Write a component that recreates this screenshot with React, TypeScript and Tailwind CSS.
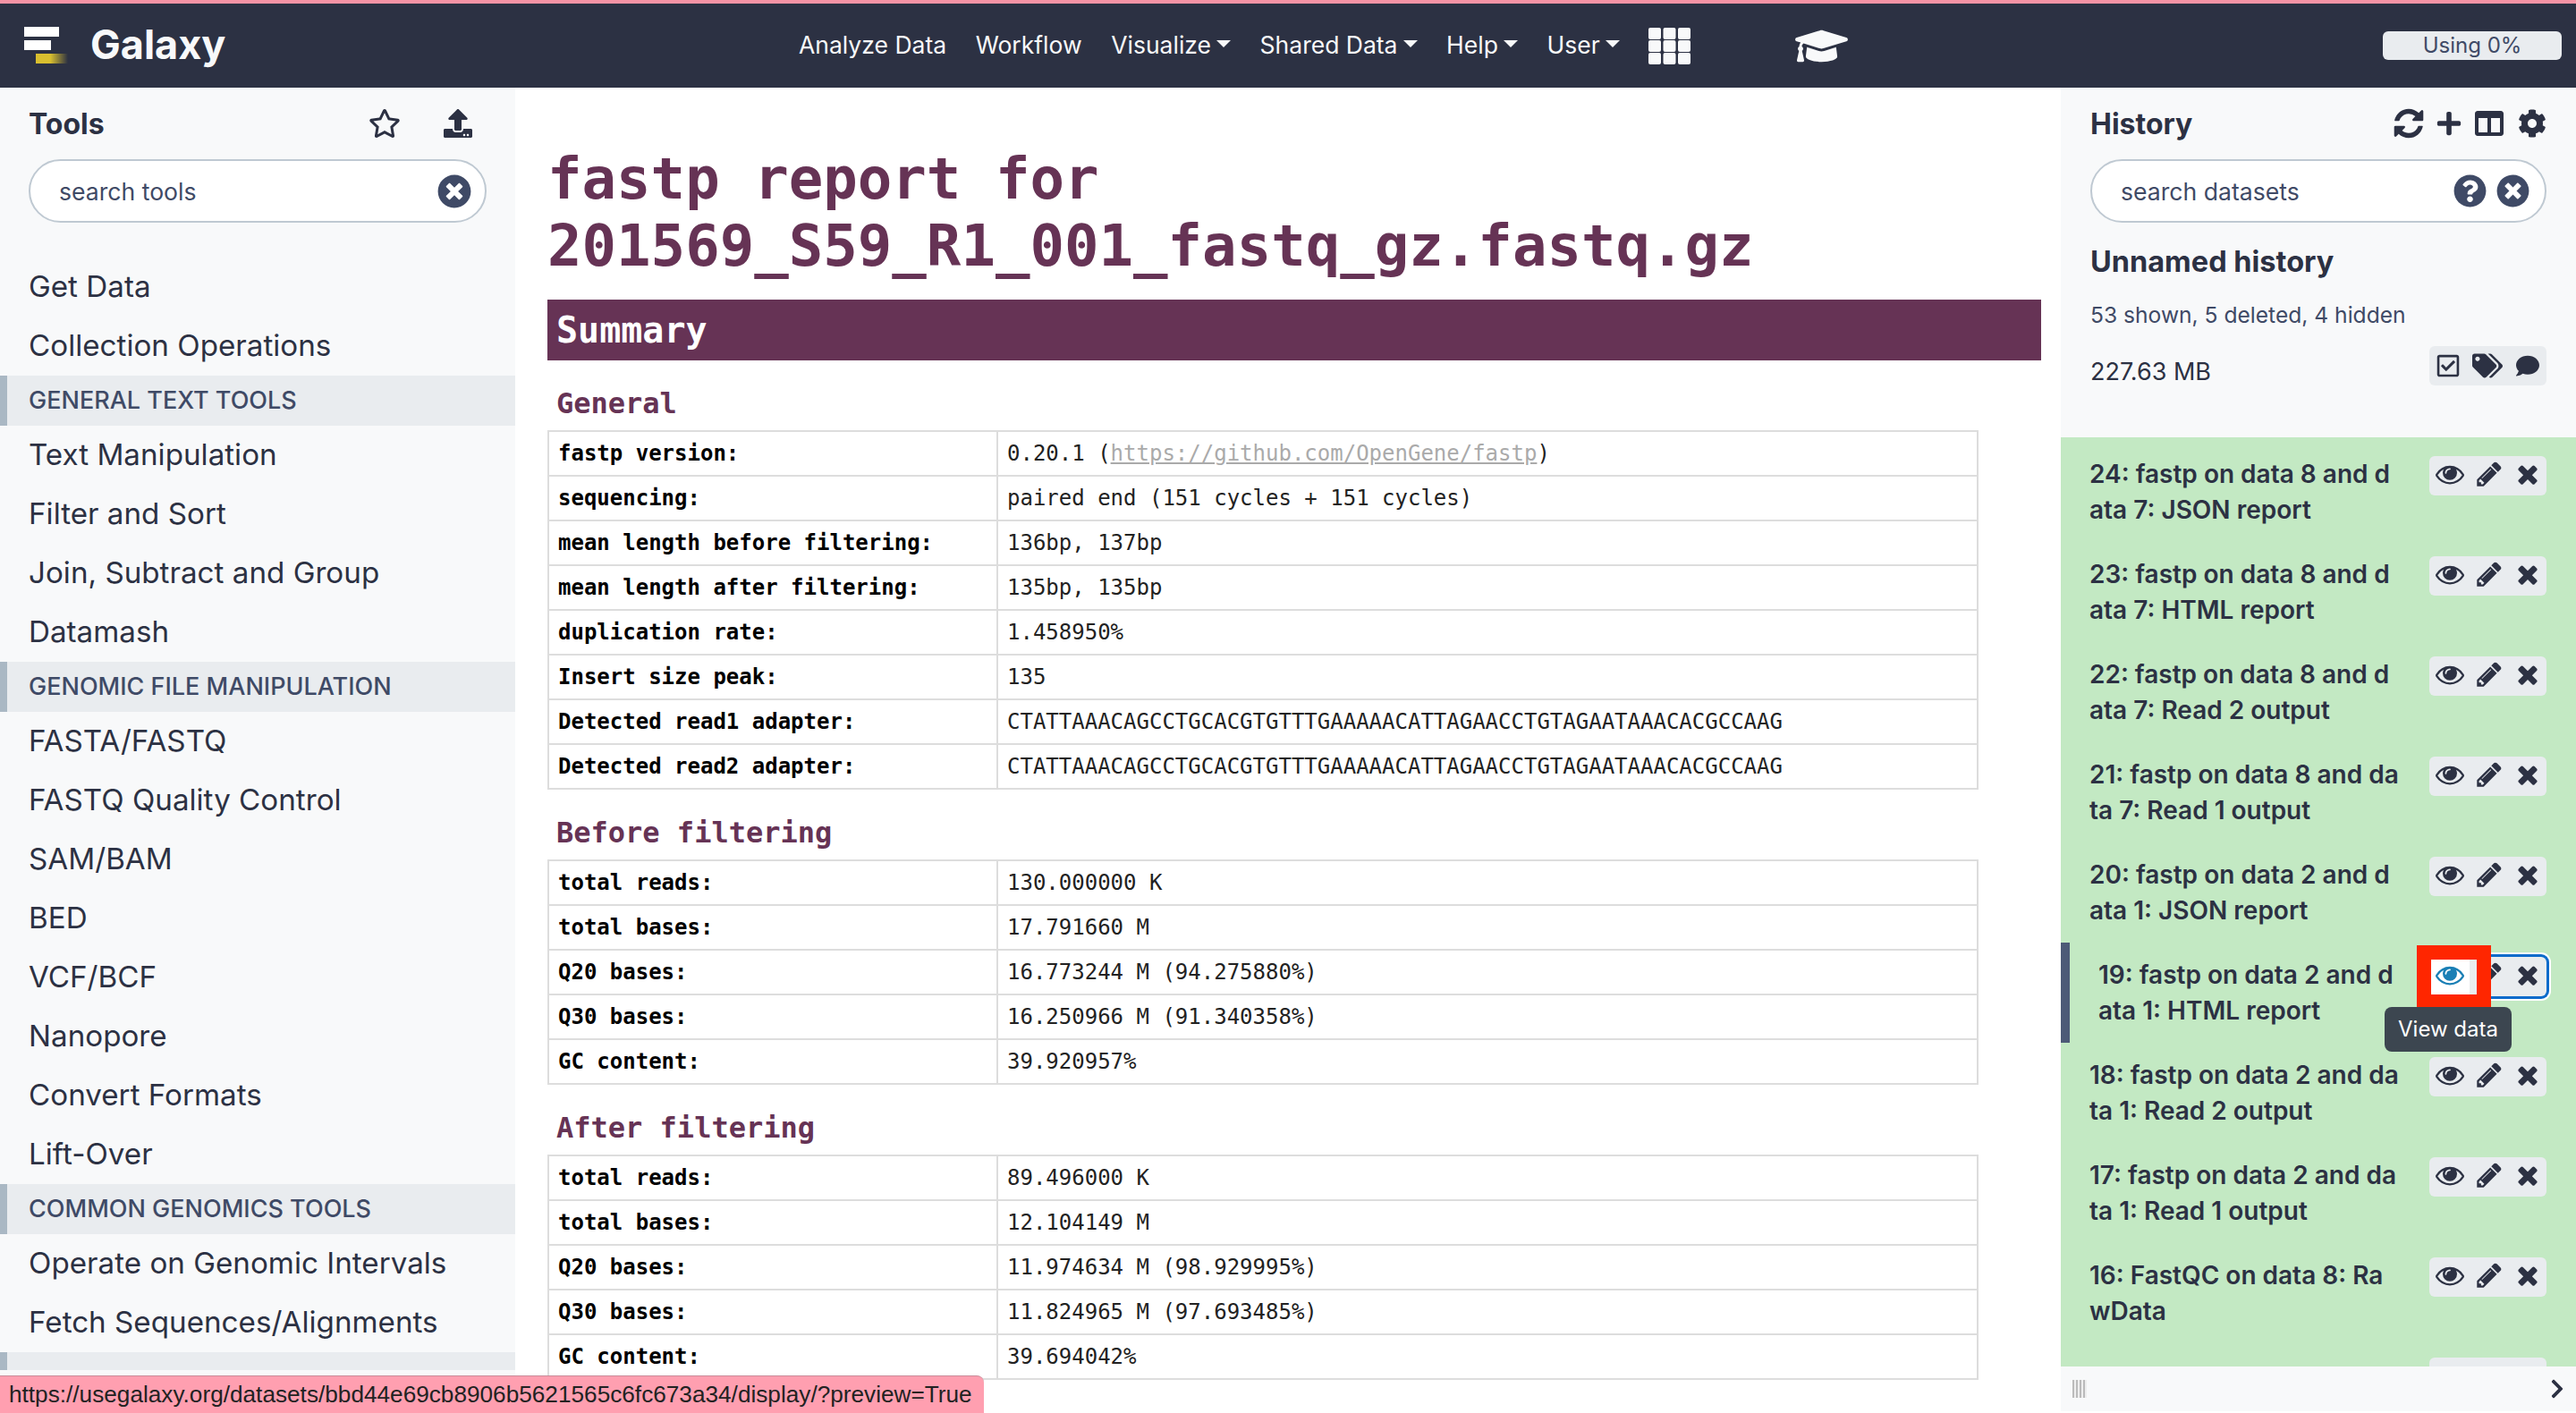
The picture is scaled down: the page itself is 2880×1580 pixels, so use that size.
import React from "react";
import {
  FaCog,
  FaColumns,
  FaComment,
  FaChevronRight,
  FaGraduationCap,
  FaPlus,
  FaQuestionCircle,
  FaRegCheckSquare,
  FaRegStar,
  FaTags,
  FaTimesCircle,
  FaUpload,
} from "react-icons/fa";

const EYE =
  "M1664 960q-152-236-381-353 61 104 61 225 0 185-131.5 316.5t-316.5 131.5-316.5-131.5-131.5-316.5q0-121 61-225-229 117-381 353 133 205 333.5 326.5t434.5 121.5 434.5-121.5 333.5-326.5zm-720-384q0-20-14-34t-34-14q-125 0-214.5 89.5t-89.5 214.5q0 20 14 34t34 14 34-14 14-34q0-86 61-147t147-61q20 0 34-14t14-34zm848 384q0 34-20 69-140 230-376.5 368.5t-499.5 138.5-499.5-139-376.5-368q-20-35-20-69t20-69q140-229 376.5-368t499.5-139 499.5 139 376.5 368q20 35 20 69z";
const PENCIL =
  "M491 1536l91-91-235-235-91 91v107h128v128h107zm523-928q0-22-22-22-10 0-17 7l-542 542q-7 7-7 17 0 22 22 22 10 0 17-7l542-542q7-7 7-17zm-54-192l416 416-832 832h-416v-416zm683 96q0 53-37 90l-166 166-416-416 166-165q36-38 90-38 53 0 91 38l235 234q37 39 37 91z";
const TIMES =
  "M1490 1322q0 40-28 68l-136 136q-28 28-68 28t-68-28l-294-294-294 294q-28 28-68 28t-68-28l-136-136q-28-28-28-68t28-68l294-294-294-294q-28-28-28-68t28-68l136-136q28-28 68-28t68 28l294 294 294-294q28-28 68-28t68 28l136 136q28 28 28 68t-28 68l-294 294 294 294q28 28 28 68z";
const REFRESH =
  "M1639 1056q0 5-1 7-64 268-268 434.5t-478 166.5q-146 0-282.5-55t-243.5-157l-129 129q-19 19-45 19t-45-19-19-45v-448q0-26 19-45t45-19h448q26 0 45 19t19 45-19 45l-137 137q71 66 161 102t187 36q134 0 250-65t186-179q11-17 53-117 8-23 30-23h192q13 0 22.5 9.5t9.5 22.5zm25-800v448q0 26-19 45t-45 19h-448q-26 0-45-19t-19-45 19-45l138-138q-148-137-349-137-134 0-250 65t-186 179q-11 17-53 117-8 23-30 23h-199q-13 0-22.5-9.5t-9.5-22.5v-7q65-268 270-434.5t480-166.5q146 0 284 55.5t245 156.5l130-129q19-19 45-19t45 19 19 45z";

const Fa4 = ({ d, className }: { d: string; className?: string }) => (
  <svg viewBox="0 0 1792 1792" fill="currentColor" className={className}>
    <path d={d} />
  </svg>
);

const toolGroups: { type: "item" | "section"; label: string }[] = [
  { type: "item", label: "Get Data" },
  { type: "item", label: "Collection Operations" },
  { type: "section", label: "GENERAL TEXT TOOLS" },
  { type: "item", label: "Text Manipulation" },
  { type: "item", label: "Filter and Sort" },
  { type: "item", label: "Join, Subtract and Group" },
  { type: "item", label: "Datamash" },
  { type: "section", label: "GENOMIC FILE MANIPULATION" },
  { type: "item", label: "FASTA/FASTQ" },
  { type: "item", label: "FASTQ Quality Control" },
  { type: "item", label: "SAM/BAM" },
  { type: "item", label: "BED" },
  { type: "item", label: "VCF/BCF" },
  { type: "item", label: "Nanopore" },
  { type: "item", label: "Convert Formats" },
  { type: "item", label: "Lift-Over" },
  { type: "section", label: "COMMON GENOMICS TOOLS" },
  { type: "item", label: "Operate on Genomic Intervals" },
  { type: "item", label: "Fetch Sequences/Alignments" },
  { type: "section", label: "" },
];

const general = [
  ["sequencing:", "paired end (151 cycles + 151 cycles)"],
  ["mean length before filtering:", "136bp, 137bp"],
  ["mean length after filtering:", "135bp, 135bp"],
  ["duplication rate:", "1.458950%"],
  ["Insert size peak:", "135"],
  ["Detected read1 adapter:", "CTATTAAACAGCCTGCACGTGTTTGAAAAACATTAGAACCTGTAGAATAAACACGCCAAG"],
  ["Detected read2 adapter:", "CTATTAAACAGCCTGCACGTGTTTGAAAAACATTAGAACCTGTAGAATAAACACGCCAAG"],
];
const before = [
  ["total reads:", "130.000000 K"],
  ["total bases:", "17.791660 M"],
  ["Q20 bases:", "16.773244 M (94.275880%)"],
  ["Q30 bases:", "16.250966 M (91.340358%)"],
  ["GC content:", "39.920957%"],
];
const after = [
  ["total reads:", "89.496000 K"],
  ["total bases:", "12.104149 M"],
  ["Q20 bases:", "11.974634 M (98.929995%)"],
  ["Q30 bases:", "11.824965 M (97.693485%)"],
  ["GC content:", "39.694042%"],
];

const datasets = [
  ["24: fastp on data 8 and d", "ata 7: JSON report"],
  ["23: fastp on data 8 and d", "ata 7: HTML report"],
  ["22: fastp on data 8 and d", "ata 7: Read 2 output"],
  ["21: fastp on data 8 and da", "ta 7: Read 1 output"],
  ["20: fastp on data 2 and d", "ata 1: JSON report"],
  ["19: fastp on data 2 and d", "ata 1: HTML report"],
  ["18: fastp on data 2 and da", "ta 1: Read 2 output"],
  ["17: fastp on data 2 and da", "ta 1: Read 1 output"],
  ["16: FastQC on data 8: Ra", "wData"],
];

const NavItem = ({ label, caret }: { label: string; caret?: boolean }) => (
  <div className="flex items-center gap-[6px] text-[26.5px] text-[#f8f9fa] whitespace-nowrap">
    <span>{label}</span>
    {caret && (
      <span className="w-0 h-0 border-x-[8px] border-x-transparent border-t-[8px] border-t-[#f8f9fa] mb-[5px]" />
    )}
  </div>
);

const ReportTable = ({ rows, children }: { rows: string[][]; children?: React.ReactNode }) => (
  <table className="w-[1600px] border-collapse table-fixed text-[24px] leading-[30px] text-[#222]">
    <colgroup>
      <col className="w-[502px]" />
      <col />
    </colgroup>
    <tbody>
      {children}
      {rows.map((r) => (
        <tr key={r[0]}>
          <td className="h-[50px] border-2 border-[#ddd] pl-[10px] font-bold text-black">{r[0]}</td>
          <td className="h-[50px] border-2 border-[#ddd] pl-[10px]">{r[1]}</td>
        </tr>
      ))}
    </tbody>
  </table>
);

const SectionTitle = ({ title }: { title: string }) => (
  <div className="pl-[10px] pt-[29px] pb-[11px] text-[32px] leading-[38px] font-bold text-[#663355]">{title}</div>
);

const DatasetRow = ({ lines, active }: { lines: string[]; active?: boolean }) => (
  <div
    className={`relative flex justify-between shrink-0 h-[112px] py-4 pl-8 pr-[33px] ${
      active ? "border-l-[10px] border-[#4d5a77]" : ""
    }`}
  >
    <div className="text-[28px] leading-[40px] font-semibold text-[#2c3143] whitespace-nowrap">
      <div>{lines[0]}</div>
      <div>{lines[1]}</div>
    </div>
    <div
      className={`flex items-start h-11 w-[131px] rounded-md bg-[#e9ecef] text-[#2c3143] ${
        active ? "shadow-[0_0_0_3px_#0c6bcb,0_0_0_5px_#ffffff]" : ""
      }`}
    >
      <div className={`flex justify-center w-[45px] h-full pt-[4px] ${active ? "bg-white text-[#1a7fb5]" : ""}`}>
        <Fa4 d={EYE} className="w-8 h-8" />
      </div>
      <div className="flex justify-center w-[43px] pt-[4px]">
        <Fa4 d={PENCIL} className="w-8 h-8" />
      </div>
      <div className="flex justify-center w-[43px] pt-[4px]">
        <Fa4 d={TIMES} className="w-8 h-8" />
      </div>
    </div>
    {active && (
      <>
        <div className="absolute left-[388px] top-[3px] w-[83px] h-[71px] border-[16px] border-[#ff2600]" />
        <div className="absolute left-[352px] top-[72px] w-[142px] h-[50px] rounded-lg bg-[#3c4650] text-white text-[24px] flex items-center justify-center">
          View data
        </div>
      </>
    )}
  </div>
);

export default function App() {
  return (
    <div className="relative h-screen flex flex-col overflow-hidden bg-white font-['Inter',sans-serif] text-[#2c3143]">
      {/* navbar */}
      <header className="flex items-center shrink-0 h-[98px] border-t-4 border-[#f593a5] bg-[#2c3143]">
        <div className="flex items-center w-[893px] shrink-0 pl-[27px]">
          <svg width="50" height="42" viewBox="0 0 50 42">
            <defs>
              <linearGradient id="logoFade" x1="0" x2="1" y1="0" y2="0">
                <stop offset="0.45" stopColor="#d9bf2f" />
                <stop offset="1" stopColor="#2c3143" />
              </linearGradient>
            </defs>
            <rect x="0" y="0" width="39" height="11" fill="#fff" />
            <rect x="0" y="15" width="30" height="11" fill="#fff" />
            <rect x="13" y="30" width="36" height="11" fill="url(#logoFade)" />
          </svg>
          <span className="ml-[24px] -mt-[3px] text-[45px] leading-none font-bold text-[#f8f9fa]">Galaxy</span>
        </div>
        <nav className="flex items-center gap-[32.6px]">
          <NavItem label="Analyze Data" />
          <NavItem label="Workflow" />
          <NavItem label="Visualize" caret />
          <NavItem label="Shared Data" caret />
          <NavItem label="Help" caret />
          <NavItem label="User" caret />
          <svg width="47" height="41" viewBox="0 0 47 41" fill="#f8f9fa">
            {[0, 14, 28].map((y) =>
              [0, 16.5, 33].map((x) => <rect key={`${x}-${y}`} x={x} y={y} width="14" height="13" rx="2" />)
            )}
          </svg>
          <FaGraduationCap className="ml-[84px] w-[59px] h-[47px] text-[#f8f9fa]" />
        </nav>
        <div className="ml-auto mr-4 flex items-center justify-center w-[200px] h-8 rounded-md bg-[#e9ecef] text-[24px] text-[#3f4a66]">
          Using 0%
        </div>
      </header>

      <div className="flex flex-1 min-h-0">
        {/* tools panel */}
        <aside className="flex flex-col w-[576px] shrink-0 bg-[#f8f9fa]">
          <div className="flex items-center h-20 pl-8 pr-[48px] shrink-0">
            <span className="text-[32px] font-bold flex-1 pt-[2px]">Tools</span>
            <FaRegStar className="w-[36px] h-[32px] mr-[48px]" />
            <FaUpload className="w-[32px] h-[32px]" />
          </div>
          <div className="flex items-center h-[71px] ml-8 mr-8 pl-8 pr-[15px] shrink-0 rounded-full border-2 border-[#bfc9d2] bg-white">
            <span className="flex-1 pt-[2px] text-[26.6px] text-[#3f4a66]">search tools</span>
            <FaTimesCircle className="w-[38px] h-[38px] text-[#3f4a66]" />
          </div>
          <div className="flex-1 min-h-0 mt-[39px] mb-[48px] overflow-hidden">
            {toolGroups.map((t, i) =>
              t.type === "section" ? (
                <div
                  key={i}
                  className="flex items-center h-14 pl-6 border-l-8 border-[#aab8c4] bg-[#e9ecef] text-[27px] font-medium text-[#3f4a66]"
                >
                  {t.label}
                </div>
              ) : (
                <div key={i} className="flex items-center h-[66px] pl-8 text-[33.2px] text-[#2c3143]">
                  {t.label}
                </div>
              )
            )}
          </div>
        </aside>

        {/* report */}
        <main className="flex-1 min-w-0 overflow-hidden pl-9 pr-[22px] pt-[65px] font-['DejaVu_Sans_Mono',monospace]">
          <h1 className="text-[64px] leading-[75px] font-bold text-[#663355]">
            fastp report for
            <br />
            201569_S59_R1_001_fastq_gz.fastq.gz
          </h1>
          <div className="flex items-center h-[68px] mt-[22px] pl-[10px] bg-[#663355] text-[40px] font-bold text-white">
            Summary
          </div>
          <SectionTitle title="General" />
          <ReportTable rows={general}>
            <tr>
              <td className="h-[50px] border-2 border-[#ddd] pl-[10px] font-bold text-black">fastp version:</td>
              <td className="h-[50px] border-2 border-[#ddd] pl-[10px]">
                0.20.1 (<span className="text-[#aaa] underline">https://github.com/OpenGene/fastp</span>)
              </td>
            </tr>
          </ReportTable>
          <SectionTitle title="Before filtering" />
          <ReportTable rows={before} />
          <SectionTitle title="After filtering" />
          <ReportTable rows={after} />
        </main>

        {/* history panel */}
        <aside className="flex flex-col w-[576px] shrink-0 bg-[#f8f9fa] mb-[2px]">
          <div className="flex items-center h-20 pl-[33px] pr-[33px] shrink-0">
            <span className="text-[32px] font-bold flex-1 pt-[2px]">History</span>
            <Fa4 d={REFRESH} className="w-[38px] h-[38px]" />
            <FaPlus className="ml-[11px] w-[30px] h-[30px]" />
            <FaColumns className="ml-[13px] w-[34px] h-[32px]" />
            <FaCog className="ml-[15px] w-[32px] h-[32px]" />
          </div>
          <div className="flex items-center h-[71px] ml-[33px] mr-[33px] pl-[32px] pr-[17px] gap-[11px] shrink-0 rounded-full border-2 border-[#bfc9d2] bg-white">
            <span className="flex-1 pt-[2px] text-[26.6px] text-[#3f4a66]">search datasets</span>
            <FaQuestionCircle className="w-[37px] h-[37px] text-[#3f4a66]" />
            <FaTimesCircle className="w-[37px] h-[37px] text-[#3f4a66]" />
          </div>
          <div className="pl-[33px] pr-[33px] shrink-0">
            <div className="mt-[24px] text-[32.5px] leading-[40px] font-bold">Unnamed history</div>
            <div className="mt-[24px] text-[24.6px] leading-[30px] text-[#3f4a66]">53 shown, 5 deleted, 4 hidden</div>
            <div className="flex items-start justify-between mt-[20px]">
              <span className="mt-[13px] text-[27px] leading-[32px]">227.63 MB</span>
              <div className="flex items-center justify-center gap-[14px] w-[131px] h-11 rounded-md bg-[#e9ecef]">
                <FaRegCheckSquare className="w-[26px] h-[28px]" />
                <FaTags className="w-[34px] h-[28px]" />
                <FaComment className="w-[28px] h-[26px]" />
              </div>
            </div>
          </div>
          <div className="flex-1 min-h-0 mt-[57px] bg-[#c3e9c3] overflow-hidden flex flex-col pt-[5px]">
            {datasets.map((d, i) => (
              <DatasetRow key={d[0]} lines={d} active={i === 5} />
            ))}
            <div className="flex justify-end shrink-0 h-[112px] py-4 pr-[33px]">
              <div className="h-11 w-[131px] rounded-md bg-[#e9ecef]" />
            </div>
          </div>
          <div className="flex items-center justify-between h-[50px] shrink-0 pl-[13px] pr-[11px]">
            <div className="w-4 h-5 bg-[repeating-linear-gradient(90deg,#bbbbbb_0,#bbbbbb_2px,#eeeeee_2px,#eeeeee_4px)]" />
            <FaChevronRight className="w-5 h-6" />
          </div>
        </aside>
      </div>

      {/* link preview at the bottom of the window */}
      <div className="absolute left-0 bottom-0 flex items-center w-[1100px] h-[42px] pl-[10px] rounded-tr-lg bg-[#ff9fb0] border-t border-[#c98a98] font-['Liberation_Sans',sans-serif] text-[26.2px] text-[#222] whitespace-nowrap">
        https://usegalaxy.org/datasets/bbd44e69cb8906b5621565c6fc673a34/display/?preview=True
      </div>
    </div>
  );
}
